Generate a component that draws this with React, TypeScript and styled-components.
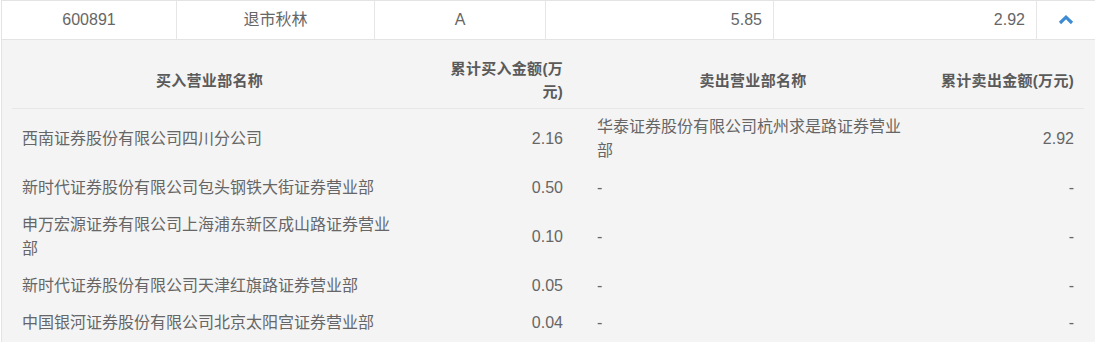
import React from "react";
import styled, { createGlobalStyle } from "styled-components";

type Seat = {
  buyName: string;
  buyAmount: string;
  sellName: string;
  sellAmount: string;
};

const seats: Seat[] = [
  {
    buyName: "西南证券股份有限公司四川分公司",
    buyAmount: "2.16",
    sellName: "华泰证券股份有限公司杭州求是路证券营业部",
    sellAmount: "2.92",
  },
  {
    buyName: "新时代证券股份有限公司包头钢铁大街证券营业部",
    buyAmount: "0.50",
    sellName: "-",
    sellAmount: "-",
  },
  {
    buyName: "申万宏源证券有限公司上海浦东新区成山路证券营业部",
    buyAmount: "0.10",
    sellName: "-",
    sellAmount: "-",
  },
  {
    buyName: "新时代证券股份有限公司天津红旗路证券营业部",
    buyAmount: "0.05",
    sellName: "-",
    sellAmount: "-",
  },
  {
    buyName: "中国银河证券股份有限公司北京太阳宫证券营业部",
    buyAmount: "0.04",
    sellName: "-",
    sellAmount: "-",
  },
];

const GlobalStyle = createGlobalStyle`
  body {
    margin: 0;
    background: #ffffff;
    font-family: "Liberation Sans", "Noto Sans CJK SC", sans-serif;
    font-size: 16px;
    color: #666666;
  }
`;

const App: React.FC = (): JSX.Element => {
  return (
    <>
      <GlobalStyle />
      <Wrapper>
        <SummaryRow>
          <SummaryCell>600891</SummaryCell>
          <SummaryCell>退市秋林</SummaryCell>
          <SummaryCell>A</SummaryCell>
          <SummaryCell $align="right">5.85</SummaryCell>
          <SummaryCell $align="right">2.92</SummaryCell>
          <ToggleCell>
            <svg width="16" height="11" viewBox="0 0 16 11">
              <polyline
                points="2,9 8,3.2 14,9"
                fill="none"
                stroke="#3d8bd3"
                strokeWidth="3.2"
              />
            </svg>
          </ToggleCell>
        </SummaryRow>

        <DetailPanel>
          <HeadRow>
            <HeadCell $align="center">买入营业部名称</HeadCell>
            <HeadCell $align="right" $padLeft={41}>
              累计买入金额(万元)
            </HeadCell>
            <HeadCell $align="center" $padLeft={34}>
              卖出营业部名称
            </HeadCell>
            <HeadCell $align="right">累计卖出金额(万元)</HeadCell>
          </HeadRow>

          {seats.map((s) => (
            <SeatRow key={s.buyName}>
              <NameCell>{s.buyName}</NameCell>
              <AmountCell $padLeft={41}>{s.buyAmount}</AmountCell>
              <NameCell $padLeft={34}>{s.sellName}</NameCell>
              <AmountCell>{s.sellAmount}</AmountCell>
            </SeatRow>
          ))}
        </DetailPanel>
      </Wrapper>
    </>
  );
};

export default App;

const Wrapper = styled.div`
  margin-left: 1px;
  border-left: 1px solid #e3e3e3;
  border-top: 1px solid #e3e3e3;
`;

const SummaryRow = styled.div`
  display: grid;
  grid-template-columns: 175px 198px 171px 228px 263px 1fr;
  height: 39px;
  box-sizing: border-box;
  border-bottom: 1px solid #e3e3e3;
  background: #ffffff;
`;

const SummaryCell = styled.div<{ $align?: "center" | "right" }>`
  box-sizing: border-box;
  border-right: 1px solid #e6e6e6;
  padding: 0 11px;
  line-height: 38px;
  text-align: ${(p) => p.$align ?? "center"};
  white-space: nowrap;
`;

const ToggleCell = styled.div`
  display: flex;
  align-items: center;
  justify-content: center;
  padding-bottom: 2px;
`;

const DetailPanel = styled.div`
  background: #f4f4f4;
  padding: 11px 11px 0 10px;
`;

const HeadRow = styled.div`
  display: grid;
  grid-template-columns: 375px 166px 346px 1fr;
  align-items: center;
  padding: 6px 10px 5px;
  border-bottom: 1px solid #e7e7e7;
`;

const HeadCell = styled.div<{ $align: "center" | "right"; $padLeft?: number }>`
  padding-left: ${(p) => p.$padLeft ?? 0}px;
  text-align: ${(p) => p.$align};
  font-size: 15px;
  font-weight: bold;
  color: #5a5a5a;
  line-height: 23px;
  letter-spacing: 0.3px;
`;

const SeatRow = styled.div`
  display: grid;
  grid-template-columns: 375px 166px 346px 1fr;
  align-items: center;
  padding: 6px 10px 7px;
  line-height: 24px;
`;

const NameCell = styled.div<{ $padLeft?: number }>`
  padding-left: ${(p) => p.$padLeft ?? 0}px;
  word-break: break-all;
`;

const AmountCell = styled.div<{ $padLeft?: number }>`
  padding-left: ${(p) => p.$padLeft ?? 0}px;
  text-align: right;
`;
